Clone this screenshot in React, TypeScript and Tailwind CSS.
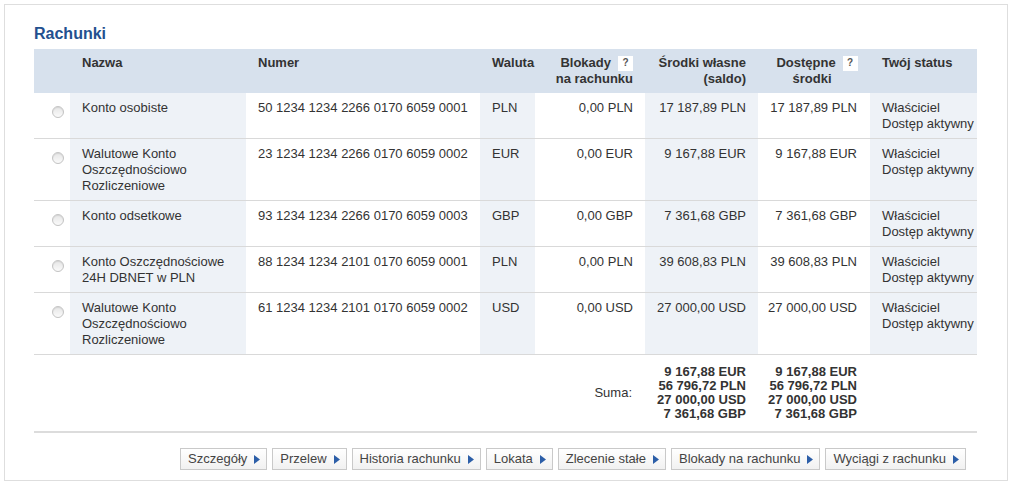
import React from 'react';

type Row = {
  name: string[];
  number: string;
  cur: string;
  blocked: string;
  own: string;
  avail: string;
};

const rows: Row[] = [
  { name: ['Konto osobiste'], number: '50 1234 1234 2266 0170 6059 0001', cur: 'PLN', blocked: '0,00 PLN', own: '17 187,89 PLN', avail: '17 187,89 PLN' },
  { name: ['Walutowe Konto', 'Oszczędnościowo', 'Rozliczeniowe'], number: '23 1234 1234 2266 0170 6059 0002', cur: 'EUR', blocked: '0,00 EUR', own: '9 167,88 EUR', avail: '9 167,88 EUR' },
  { name: ['Konto odsetkowe'], number: '93 1234 1234 2266 0170 6059 0003', cur: 'GBP', blocked: '0,00 GBP', own: '7 361,68 GBP', avail: '7 361,68 GBP' },
  { name: ['Konto Oszczędnościowe', '24H DBNET w PLN'], number: '88 1234 1234 2101 0170 6059 0001', cur: 'PLN', blocked: '0,00 PLN', own: '39 608,83 PLN', avail: '39 608,83 PLN' },
  { name: ['Walutowe Konto', 'Oszczędnościowo', 'Rozliczeniowe'], number: '61 1234 1234 2101 0170 6059 0002', cur: 'USD', blocked: '0,00 USD', own: '27 000,00 USD', avail: '27 000,00 USD' },
];

const sums = ['9 167,88 EUR', '56 796,72 PLN', '27 000,00 USD', '7 361,68 GBP'];

const actions = ['Szczegóły', 'Przelew', 'Historia rachunku', 'Lokata', 'Zlecenie stałe', 'Blokady na rachunku', 'Wyciągi z rachunku'];

function Help() {
  return (
    <span className="inline-flex items-center justify-center w-[15px] h-[15px] ml-[7px] bg-white text-[#555] text-[10px] font-bold leading-none align-[1px]">
      ?
    </span>
  );
}

function Radio() {
  return (
    <span className="block w-[12px] h-[12px] rounded-full border border-[#c4c4c4] bg-gradient-to-b from-[#e6e6e6] to-[#fafafa] shadow-[inset_0_1px_1px_rgba(0,0,0,0.08)]" />
  );
}

function Arrow() {
  return (
    <svg width="6" height="9" viewBox="0 0 6 9" className="ml-[7px]">
      <path d="M0 0 L6 4.5 L0 9 Z" fill="#2c5ea8" />
    </svg>
  );
}

export default function App() {
  const shade = 'bg-[#eef2f7]';
  return (
    <div className="ml-[4px] mt-[4px] w-[1004px] h-[477px] border border-[#dedede] bg-white pl-[29px] pt-[19px]" style={{ fontFamily: '"Liberation Sans", Arial, sans-serif' }}>
      <h2 className="text-[16px] leading-[20px] font-bold text-[#23508f] mb-[5px]">Rachunki</h2>

      <table className="w-[943px] border-collapse table-fixed text-[13px] leading-[16px] text-[#333]">
        <colgroup>
          <col className="w-[36px]" />
          <col className="w-[176px]" />
          <col className="w-[234px]" />
          <col className="w-[55px]" />
          <col className="w-[110px]" />
          <col className="w-[113px]" />
          <col className="w-[112px]" />
          <col className="w-[107px]" />
        </colgroup>
        <thead>
          <tr className="bg-[#d7e1ed] h-[44px] align-top font-bold text-[#333]">
            <th />
            <th className="text-left pl-[12px] pt-[6px]">Nazwa</th>
            <th className="text-left pl-[12px] pt-[6px]">Numer</th>
            <th className="text-left pl-[12px] pt-[6px]">Waluta</th>
            <th className="text-right pr-[12px] pt-[6px] whitespace-nowrap">
              Blokady<Help />
              <br />na rachunku
            </th>
            <th className="text-right pr-[12px] pt-[6px] whitespace-nowrap">
              Środki własne
              <br />(saldo)
            </th>
            <th className="text-center pl-[6px] pt-[6px] whitespace-nowrap">
              Dostępne<Help />
              <br />
              <span className="pr-[10px]">środki</span>
            </th>
            <th className="text-left pl-[12px] pt-[6px]">Twój status</th>
          </tr>
        </thead>
        <tbody>
          {rows.map((r) => (
            <tr key={r.number} className="align-top border-b border-[#d9d9d9]">
              <td className="pl-[18px] pt-[13px]">
                <Radio />
              </td>
              <td className={`${shade} pl-[12px] pt-[7px] pb-[6px]`}>
                {r.name.map((n) => (
                  <div key={n}>{n}</div>
                ))}
              </td>
              <td className="pl-[12px] pt-[7px] whitespace-nowrap">{r.number}</td>
              <td className={`${shade} pl-[12px] pt-[7px]`}>{r.cur}</td>
              <td className="text-right pr-[12px] pt-[7px]">{r.blocked}</td>
              <td className={`${shade} text-right pr-[12px] pt-[7px] whitespace-nowrap`}>{r.own}</td>
              <td className="text-right pr-[13px] pt-[7px] whitespace-nowrap">{r.avail}</td>
              <td className={`${shade} pl-[12px] pt-[7px] pb-[6px] whitespace-nowrap`}>
                <div>Właściciel</div>
                <div>Dostęp aktywny</div>
              </td>
            </tr>
          ))}
          <tr className="border-b-2 border-[#dcdcdc]">
            <td colSpan={4} />
            <td className="text-right pr-[13px] align-middle">Suma:</td>
            <td className="text-right pr-[12px] pt-[10px] pb-[10px] font-bold leading-[14px] whitespace-nowrap">
              {sums.map((s) => (
                <div key={s}>{s}</div>
              ))}
            </td>
            <td className="text-right pr-[13px] pt-[10px] pb-[10px] font-bold leading-[14px] whitespace-nowrap">
              {sums.map((s) => (
                <div key={s}>{s}</div>
              ))}
            </td>
            <td />
          </tr>
        </tbody>
      </table>

      <div className="w-[943px] flex justify-end gap-[5px] pr-[11px] mt-[15px]">
        {actions.map((a) => (
          <button
            key={a}
            className="flex items-center h-[22px] pl-[7px] pr-[6px] border border-[#c9c9c9] bg-gradient-to-b from-white to-[#f1f1f1] text-[13px] text-[#444] whitespace-nowrap"
          >
            {a}
            <Arrow />
          </button>
        ))}
      </div>
    </div>
  );
}
